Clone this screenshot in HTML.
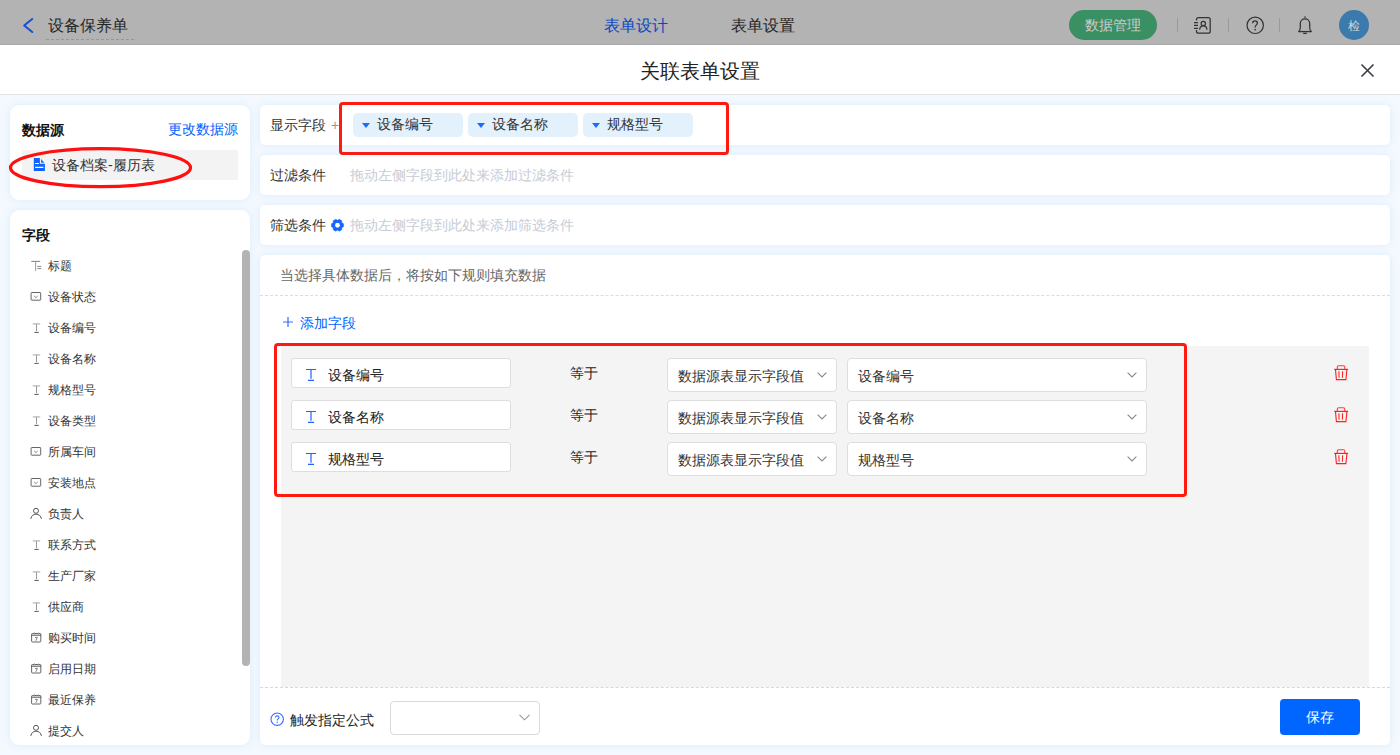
<!DOCTYPE html>
<html><head><meta charset="utf-8">
<style>
*{box-sizing:border-box;margin:0;padding:0}
html,body{width:1400px;height:755px;overflow:hidden}
body{font-family:"Liberation Sans",sans-serif;font-size:14px;color:#333;background:#f3f9fe;position:relative}
.abs{position:absolute}
.t{position:absolute;white-space:nowrap;line-height:20px}
/* top header under mask */
#hdr{position:absolute;left:0;top:0;width:1400px;height:45px;background:#b3b3b3;border-bottom:1px solid #aaaaaa}
#modalhd{position:absolute;left:0;top:45px;width:1400px;height:50px;background:#fff;border-bottom:1px solid #e3e3e3}
.card{position:absolute;background:#fff;box-shadow:0 0 9px rgba(40,120,240,0.10)}
.fld{position:absolute;left:48px;height:20px;line-height:20px;font-size:12px;color:#333;white-space:nowrap}
.fld .fi{position:absolute;left:0;top:4px;width:12px;height:12px}
.fld .fi svg{display:block}
.fld .ft{position:absolute;left:17px;top:0}
.tag{position:absolute;top:113px;width:110px;height:24px;border-radius:5px;background:#e3f1fd}
.tag .tri{position:absolute;left:9px;top:10px;width:0;height:0;border-left:4.5px solid transparent;border-right:4.5px solid transparent;border-top:5px solid #1a6cff}
.tag span{position:absolute;left:24px;top:1px;line-height:20px;color:#333}
.ph{color:#c5ccd6}
.inp{position:absolute;left:291px;width:220px;height:30px;background:#fff;border:1px solid #dedede;border-radius:3px}
.inp .ti{position:absolute;left:13px;top:9px}
.inp .it{position:absolute;left:36px;top:5.5px;line-height:20px;color:#222}
.eq{position:absolute;left:569.5px;line-height:20px;color:#222;margin-top:5px}
.sel{position:absolute;height:34px;background:#fff;border:1px solid #dedede;border-radius:4px}
.s1{left:667px;width:170px}
.s2{left:847px;width:300px}
.sel .st{position:absolute;left:10px;top:7px;line-height:20px;color:#333}
.sel .chev{position:absolute;top:13px}
.s1 .chev{left:149px}
.s2 .chev{left:279px}
.trash{position:absolute;left:1334px}
.redbox{position:absolute;border:3px solid #ff1a0f;border-radius:4px}
</style></head>
<body>
<!-- app header (masked) -->
<div id="hdr">
  <svg class="abs" style="left:15px;top:10px" width="25" height="30" viewBox="0 0 25 30"><path d="M17.2 9L9.2 15.5L17.2 22" stroke="#1b4fd3" stroke-width="2.1" fill="none" stroke-linecap="round" stroke-linejoin="round"/></svg>
  <div class="t" style="left:48px;top:16px;font-size:16px;line-height:20px;color:#262626">设备保养单</div>
  <div class="abs" style="left:46px;top:39px;width:88px;border-top:1px dashed #979797"></div>
  <div class="t" style="left:603.5px;top:16px;font-size:16px;color:#0b46c4">表单设计</div>
  <div class="t" style="left:731px;top:16px;font-size:16px;color:#262626">表单设置</div>
  <div class="abs" style="left:1069px;top:10px;width:88px;height:30px;border-radius:15px;background:#3a8f63"></div>
  <div class="t" style="left:1085px;top:15px;font-size:14px;color:#cdcbcb">数据管理</div>
  <div class="abs" style="left:1177px;top:18px;width:1px;height:14px;background:#999"></div>
  <svg class="abs" style="left:1185px;top:10px" width="40" height="30" viewBox="0 0 40 30"><path d="M11.5 10.6V9.5C11.5 8.4 12.4 7.5 13.5 7.5H23.2C24.3 7.5 25.2 8.4 25.2 9.5V21.2C25.2 22.3 24.3 23.2 23.2 23.2H13.5C12.4 23.2 11.5 22.3 11.5 21.2V20" stroke="#333" stroke-width="1.25" fill="none"/><path d="M9 12.6H13M9 15.3H13M9 18.3H13" stroke="#333" stroke-width="1.2"/><circle cx="18.3" cy="13.5" r="2.2" stroke="#333" stroke-width="1.2" fill="none"/><path d="M14.6 19.8C14.8 17.3 16.4 15.9 18.3 15.9S21.8 17.3 22 19.8" stroke="#333" stroke-width="1.2" fill="none"/></svg>
  <div class="abs" style="left:1228px;top:18px;width:1px;height:14px;background:#999"></div>
  <svg class="abs" style="left:1240px;top:10px" width="30" height="30" viewBox="0 0 30 30"><circle cx="15.2" cy="15.3" r="8.2" stroke="#333" stroke-width="1.2" fill="none"/><path d="M12.6 13.2C12.6 11.8 13.7 10.9 15 10.9S17.4 11.8 17.4 13.1C17.4 14.8 15.1 15.1 15.1 17.4" stroke="#333" stroke-width="1.3" fill="none"/><circle cx="15.1" cy="19.6" r="0.85" fill="#333"/></svg>
  <div class="abs" style="left:1279px;top:18px;width:1px;height:14px;background:#999"></div>
  <svg class="abs" style="left:1297px;top:16px" width="16" height="19" viewBox="0 0 16 19"><circle cx="8" cy="1.1" r="0.8" fill="#333"/><path d="M1.8 15.3C3.2 14.3 3.3 13 3.3 11.5V7.6C3.3 4.8 5.4 2.9 8 2.9S12.7 4.8 12.7 7.6V11.5C12.7 13 12.8 14.3 14.2 15.3" stroke="#333" stroke-width="1.25" fill="none"/><path d="M1.2 15.6H14.8" stroke="#333" stroke-width="1.3"/><path d="M6.2 17.4H9.8" stroke="#333" stroke-width="1.3"/></svg>
  <div class="abs" style="left:1339px;top:10px;width:30px;height:30px;border-radius:15px;background:#3a7aad"></div>
  <div class="t" style="left:1348px;top:15.5px;font-size:12px;color:#d2d2d2">检</div>
</div>

<!-- modal header -->
<div id="modalhd">
  <div class="t" style="left:640px;top:14px;font-size:20px;line-height:24px;color:#222">关联表单设置</div>
  <svg class="abs" style="left:1360px;top:17.5px" width="15" height="15" viewBox="0 0 15 15"><path d="M1.5 1.5L13.5 13.5M13.5 1.5L1.5 13.5" stroke="#3c3c44" stroke-width="1.6"/></svg>
</div>

<!-- left cards -->
<div class="card" style="left:10px;top:105px;width:240px;height:95px;border-radius:9px"></div>
<div class="t" style="left:22px;top:120px;font-weight:bold;color:#111">数据源</div>
<div class="t" style="left:168px;top:119px;color:#0062ff">更改数据源</div>
<div class="abs" style="left:22px;top:150px;width:216px;height:30px;border-radius:2px;background:#f3f3f3"></div>
<svg class="abs" style="left:29px;top:154px" width="20" height="22" viewBox="0 0 20 22"><path d="M4.8 4.1H10.9V9.8H15.9V16.9H4.8Z" fill="#0f63ff"/><path d="M12.1 5.1L15.3 8.7H12.1Z" fill="#0f63ff"/><path d="M6.1 9.5H9.9M6.1 13.4H14.4" stroke="#fff" stroke-width="1.2"/></svg>
<div class="t" style="left:52px;top:155px;color:#333">设备档案-履历表</div>
<svg class="abs" style="left:0;top:140px" width="210" height="60"><ellipse cx="100.5" cy="27.7" rx="90" ry="19" stroke="#ff1010" stroke-width="3.2" fill="none"/></svg>

<div class="card" style="left:10px;top:210px;width:240px;height:535px;border-radius:9px"></div>
<div class="t" style="left:22px;top:225px;font-weight:bold;color:#111">字段</div>
<svg class="abs" style="left:26px;top:256px" width="20" height="20" viewBox="0 0 20 20"><path d="M5.3 5.4H14.2" stroke="#888" stroke-width="1.1"/><path d="M9.6 5.4V14.9" stroke="#999" stroke-width="1"/><path d="M11.3 10.4H15.2M11.3 12.6H15.2" stroke="#777" stroke-width="0.9"/></svg><div class="fld" style="top:256px">标题</div>
<svg class="abs" style="left:26px;top:287px" width="20" height="20" viewBox="0 0 20 20"><rect x="5.1" y="5.5" width="9.6" height="7.7" rx="0.6" stroke="#666" stroke-width="1" fill="none"/><path d="M8.1 8.9L9.9 10.6L11.7 8.9" stroke="#777" stroke-width="0.9" fill="none"/></svg><div class="fld" style="top:287px">设备状态</div>
<svg class="abs" style="left:26px;top:318px" width="20" height="20" viewBox="0 0 20 20"><path d="M6.8 5.9H14.2" stroke="#bbb" stroke-width="1.3"/><path d="M10.5 5.9V13.2" stroke="#999" stroke-width="1"/><path d="M8.4 14.4H12.7" stroke="#555" stroke-width="1"/></svg><div class="fld" style="top:318px">设备编号</div>
<svg class="abs" style="left:26px;top:349px" width="20" height="20" viewBox="0 0 20 20"><path d="M6.8 5.9H14.2" stroke="#bbb" stroke-width="1.3"/><path d="M10.5 5.9V13.2" stroke="#999" stroke-width="1"/><path d="M8.4 14.4H12.7" stroke="#555" stroke-width="1"/></svg><div class="fld" style="top:349px">设备名称</div>
<svg class="abs" style="left:26px;top:380px" width="20" height="20" viewBox="0 0 20 20"><path d="M6.8 5.9H14.2" stroke="#bbb" stroke-width="1.3"/><path d="M10.5 5.9V13.2" stroke="#999" stroke-width="1"/><path d="M8.4 14.4H12.7" stroke="#555" stroke-width="1"/></svg><div class="fld" style="top:380px">规格型号</div>
<svg class="abs" style="left:26px;top:411px" width="20" height="20" viewBox="0 0 20 20"><path d="M6.8 5.9H14.2" stroke="#bbb" stroke-width="1.3"/><path d="M10.5 5.9V13.2" stroke="#999" stroke-width="1"/><path d="M8.4 14.4H12.7" stroke="#555" stroke-width="1"/></svg><div class="fld" style="top:411px">设备类型</div>
<svg class="abs" style="left:26px;top:442px" width="20" height="20" viewBox="0 0 20 20"><rect x="5.1" y="5.5" width="9.6" height="7.7" rx="0.6" stroke="#666" stroke-width="1" fill="none"/><path d="M8.1 8.9L9.9 10.6L11.7 8.9" stroke="#777" stroke-width="0.9" fill="none"/></svg><div class="fld" style="top:442px">所属车间</div>
<svg class="abs" style="left:26px;top:473px" width="20" height="20" viewBox="0 0 20 20"><rect x="5.1" y="5.5" width="9.6" height="7.7" rx="0.6" stroke="#666" stroke-width="1" fill="none"/><path d="M8.1 8.9L9.9 10.6L11.7 8.9" stroke="#777" stroke-width="0.9" fill="none"/></svg><div class="fld" style="top:473px">安装地点</div>
<svg class="abs" style="left:26px;top:504px" width="20" height="20" viewBox="0 0 20 20"><circle cx="10" cy="6.8" r="2.5" stroke="#555" stroke-width="1" fill="none"/><path d="M4.8 14.9C5.2 11.9 7.4 10.2 10.1 10.2S15 11.9 15.4 14.9" stroke="#555" stroke-width="1" fill="none"/></svg><div class="fld" style="top:504px">负责人</div>
<svg class="abs" style="left:26px;top:535px" width="20" height="20" viewBox="0 0 20 20"><path d="M6.8 5.9H14.2" stroke="#bbb" stroke-width="1.3"/><path d="M10.5 5.9V13.2" stroke="#999" stroke-width="1"/><path d="M8.4 14.4H12.7" stroke="#555" stroke-width="1"/></svg><div class="fld" style="top:535px">联系方式</div>
<svg class="abs" style="left:26px;top:566px" width="20" height="20" viewBox="0 0 20 20"><path d="M6.8 5.9H14.2" stroke="#bbb" stroke-width="1.3"/><path d="M10.5 5.9V13.2" stroke="#999" stroke-width="1"/><path d="M8.4 14.4H12.7" stroke="#555" stroke-width="1"/></svg><div class="fld" style="top:566px">生产厂家</div>
<svg class="abs" style="left:26px;top:597px" width="20" height="20" viewBox="0 0 20 20"><path d="M6.8 5.9H14.2" stroke="#bbb" stroke-width="1.3"/><path d="M10.5 5.9V13.2" stroke="#999" stroke-width="1"/><path d="M8.4 14.4H12.7" stroke="#555" stroke-width="1"/></svg><div class="fld" style="top:597px">供应商</div>
<svg class="abs" style="left:26px;top:628px" width="20" height="20" viewBox="0 0 20 20"><rect x="5.6" y="5.5" width="9.2" height="8.5" rx="0.8" stroke="#666" stroke-width="1" fill="none"/><path d="M5.1 7.2H15.3" stroke="#555" stroke-width="1"/><path d="M8.4 4.4V6.4M12.4 4.4V6.4" stroke="#999" stroke-width="0.9"/><path d="M8.9 9.4H11.4L9.8 12.8" stroke="#777" stroke-width="0.9" fill="none"/></svg><div class="fld" style="top:628px">购买时间</div>
<svg class="abs" style="left:26px;top:659px" width="20" height="20" viewBox="0 0 20 20"><rect x="5.6" y="5.5" width="9.2" height="8.5" rx="0.8" stroke="#666" stroke-width="1" fill="none"/><path d="M5.1 7.2H15.3" stroke="#555" stroke-width="1"/><path d="M8.4 4.4V6.4M12.4 4.4V6.4" stroke="#999" stroke-width="0.9"/><path d="M8.9 9.4H11.4L9.8 12.8" stroke="#777" stroke-width="0.9" fill="none"/></svg><div class="fld" style="top:659px">启用日期</div>
<svg class="abs" style="left:26px;top:690px" width="20" height="20" viewBox="0 0 20 20"><rect x="5.6" y="5.5" width="9.2" height="8.5" rx="0.8" stroke="#666" stroke-width="1" fill="none"/><path d="M5.1 7.2H15.3" stroke="#555" stroke-width="1"/><path d="M8.4 4.4V6.4M12.4 4.4V6.4" stroke="#999" stroke-width="0.9"/><path d="M8.9 9.4H11.4L9.8 12.8" stroke="#777" stroke-width="0.9" fill="none"/></svg><div class="fld" style="top:690px">最近保养</div>
<svg class="abs" style="left:26px;top:721px" width="20" height="20" viewBox="0 0 20 20"><circle cx="10" cy="6.8" r="2.5" stroke="#555" stroke-width="1" fill="none"/><path d="M4.8 14.9C5.2 11.9 7.4 10.2 10.1 10.2S15 11.9 15.4 14.9" stroke="#555" stroke-width="1" fill="none"/></svg><div class="fld" style="top:721px">提交人</div>

<div class="abs" style="left:242px;top:250px;width:8px;height:416px;border-radius:4px;background:#b3b3b3"></div>

<!-- right rows -->
<div class="card" style="left:260px;top:105px;width:1130px;height:40px;border-radius:5px"></div>
<div class="t" style="left:270px;top:115px;color:#333">显示字段</div>
<div class="t" style="left:331px;top:115px;color:#999">+</div>
<div class="tag" style="left:353px"><i class="tri"></i><span>设备编号</span></div>
<div class="tag" style="left:468px"><i class="tri"></i><span>设备名称</span></div>
<div class="tag" style="left:583px"><i class="tri"></i><span>规格型号</span></div>
<div class="redbox" style="left:339px;top:102px;width:390px;height:53px"></div>

<div class="card" style="left:260px;top:155px;width:1130px;height:40px;border-radius:5px"></div>
<div class="t" style="left:270px;top:165px;color:#333">过滤条件</div>
<div class="t ph" style="left:350px;top:165px">拖动左侧字段到此处来添加过滤条件</div>

<div class="card" style="left:260px;top:205px;width:1130px;height:40px;border-radius:5px"></div>
<div class="t" style="left:270px;top:215px;color:#333">筛选条件</div>
<svg class="abs" style="left:326px;top:214px" width="24" height="24" viewBox="0 0 24 24"><path d="M17.52 9.70 L17.52 12.70 L15.74 13.65 L15.81 15.66 L13.21 17.16 L11.50 16.10 L9.79 17.16 L7.19 15.66 L7.26 13.65 L5.48 12.70 L5.48 9.70 L7.26 8.75 L7.19 6.74 L9.79 5.24 L11.50 6.30 L13.21 5.24 L15.81 6.74 L15.74 8.75Z" fill="#1464ff" stroke="#1464ff" stroke-width="0.5" stroke-linejoin="round"/><circle cx="11.5" cy="11.25" r="2.4" fill="#fff"/></svg>
<div class="t ph" style="left:350px;top:215px">拖动左侧字段到此处来添加筛选条件</div>

<!-- big card -->
<div class="card" style="left:260px;top:255px;width:1130px;height:490px;border-radius:5px"></div>
<div class="t" style="left:280px;top:265px;color:#666">当选择具体数据后，将按如下规则填充数据</div>
<div class="abs" style="left:260px;top:295px;width:1130px;border-top:1px dashed #dcdcdc"></div>
<svg class="abs" style="left:283px;top:316px" width="10" height="12" viewBox="0 0 10 12"><path d="M5 1V11M0 6H10" stroke="#3a6cff" stroke-width="1.2"/></svg>
<div class="t" style="left:300px;top:313px;color:#0062ff">添加字段</div>
<div class="abs" style="left:281px;top:346px;width:1088px;height:341px;background:#f4f4f4"></div>
<div class="inp" style="top:358px"><svg class="ti" width="12" height="14" viewBox="0 0 12 14"><path d="M1 1.5H11M6 1.5V10.8M3 12.4H9" stroke="#1f62ff" stroke-width="1.2" fill="none"/></svg><span class="it">设备编号</span></div>
<div class="eq" style="top:358px">等于</div>
<div class="sel s1" style="top:358px"><span class="st">数据源表显示字段值</span><svg class="chev" width="10" height="6" viewBox="0 0 10 6"><path d="M0.6 0.6L5 5L9.4 0.6" stroke="#8a8a8a" stroke-width="1.15" fill="none"/></svg></div>
<div class="sel s2" style="top:358px"><span class="st">设备编号</span><svg class="chev" width="10" height="6" viewBox="0 0 10 6"><path d="M0.6 0.6L5 5L9.4 0.6" stroke="#8a8a8a" stroke-width="1.15" fill="none"/></svg></div>
<svg class="trash" style="top:365px" width="15" height="16" viewBox="0 0 15 16"><path d="M3.3 4.2V2.3C3.3 1.3 3.9 0.7 4.8 0.7H9.3C10.2 0.7 10.8 1.3 10.8 2.3V4.2" stroke="#ff3b3b" stroke-width="1.1" fill="none"/><path d="M0.2 4.4H14.1" stroke="#ff1f1f" stroke-width="1.2"/><path d="M1.5 4.6L2.4 14.6H11.9L12.9 4.6" stroke="#ff1f1f" stroke-width="1.1" fill="none"/><path d="M4.9 6.3L5.1 12.8M8.6 6.3L8.4 12.8" stroke="#ff1f1f" stroke-width="1.05"/></svg>
<div class="inp" style="top:400px"><svg class="ti" width="12" height="14" viewBox="0 0 12 14"><path d="M1 1.5H11M6 1.5V10.8M3 12.4H9" stroke="#1f62ff" stroke-width="1.2" fill="none"/></svg><span class="it">设备名称</span></div>
<div class="eq" style="top:400px">等于</div>
<div class="sel s1" style="top:400px"><span class="st">数据源表显示字段值</span><svg class="chev" width="10" height="6" viewBox="0 0 10 6"><path d="M0.6 0.6L5 5L9.4 0.6" stroke="#8a8a8a" stroke-width="1.15" fill="none"/></svg></div>
<div class="sel s2" style="top:400px"><span class="st">设备名称</span><svg class="chev" width="10" height="6" viewBox="0 0 10 6"><path d="M0.6 0.6L5 5L9.4 0.6" stroke="#8a8a8a" stroke-width="1.15" fill="none"/></svg></div>
<svg class="trash" style="top:407px" width="15" height="16" viewBox="0 0 15 16"><path d="M3.3 4.2V2.3C3.3 1.3 3.9 0.7 4.8 0.7H9.3C10.2 0.7 10.8 1.3 10.8 2.3V4.2" stroke="#ff3b3b" stroke-width="1.1" fill="none"/><path d="M0.2 4.4H14.1" stroke="#ff1f1f" stroke-width="1.2"/><path d="M1.5 4.6L2.4 14.6H11.9L12.9 4.6" stroke="#ff1f1f" stroke-width="1.1" fill="none"/><path d="M4.9 6.3L5.1 12.8M8.6 6.3L8.4 12.8" stroke="#ff1f1f" stroke-width="1.05"/></svg>
<div class="inp" style="top:442px"><svg class="ti" width="12" height="14" viewBox="0 0 12 14"><path d="M1 1.5H11M6 1.5V10.8M3 12.4H9" stroke="#1f62ff" stroke-width="1.2" fill="none"/></svg><span class="it">规格型号</span></div>
<div class="eq" style="top:442px">等于</div>
<div class="sel s1" style="top:442px"><span class="st">数据源表显示字段值</span><svg class="chev" width="10" height="6" viewBox="0 0 10 6"><path d="M0.6 0.6L5 5L9.4 0.6" stroke="#8a8a8a" stroke-width="1.15" fill="none"/></svg></div>
<div class="sel s2" style="top:442px"><span class="st">规格型号</span><svg class="chev" width="10" height="6" viewBox="0 0 10 6"><path d="M0.6 0.6L5 5L9.4 0.6" stroke="#8a8a8a" stroke-width="1.15" fill="none"/></svg></div>
<svg class="trash" style="top:449px" width="15" height="16" viewBox="0 0 15 16"><path d="M3.3 4.2V2.3C3.3 1.3 3.9 0.7 4.8 0.7H9.3C10.2 0.7 10.8 1.3 10.8 2.3V4.2" stroke="#ff3b3b" stroke-width="1.1" fill="none"/><path d="M0.2 4.4H14.1" stroke="#ff1f1f" stroke-width="1.2"/><path d="M1.5 4.6L2.4 14.6H11.9L12.9 4.6" stroke="#ff1f1f" stroke-width="1.1" fill="none"/><path d="M4.9 6.3L5.1 12.8M8.6 6.3L8.4 12.8" stroke="#ff1f1f" stroke-width="1.05"/></svg>

<div class="redbox" style="left:274px;top:343px;width:913px;height:154px"></div>
<div class="abs" style="left:260px;top:687px;width:1130px;border-top:1px dashed #d8d8d8"></div>
<svg class="abs" style="left:270px;top:712px" width="15" height="15" viewBox="0 0 15 15"><circle cx="7.2" cy="7.2" r="6.2" stroke="#3a6cff" stroke-width="1.1" fill="none"/><path d="M5.4 5.6C5.4 4.5 6.2 3.9 7.2 3.9S9 4.5 9 5.5C9 6.8 7.2 6.9 7.2 8.4" stroke="#3a6cff" stroke-width="1.1" fill="none"/><circle cx="7.2" cy="10.3" r="0.7" fill="#3a6cff"/></svg>
<div class="t" style="left:290px;top:710px;color:#222">触发指定公式</div>
<div class="abs" style="left:390px;top:701px;width:150px;height:34px;border:1px solid #d9d9d9;border-radius:4px;background:#fff"></div>
<svg class="abs" style="left:519px;top:714px" width="11" height="7" viewBox="0 0 11 7"><path d="M0.5 0.8L5.5 5.8L10.5 0.8" stroke="#999" stroke-width="1.1" fill="none"/></svg>
<div class="abs" style="left:1280px;top:699px;width:80px;height:36px;border-radius:4px;background:#0066ff"></div>
<div class="t" style="left:1306px;top:707px;color:#fff">保存</div>
</body></html>
